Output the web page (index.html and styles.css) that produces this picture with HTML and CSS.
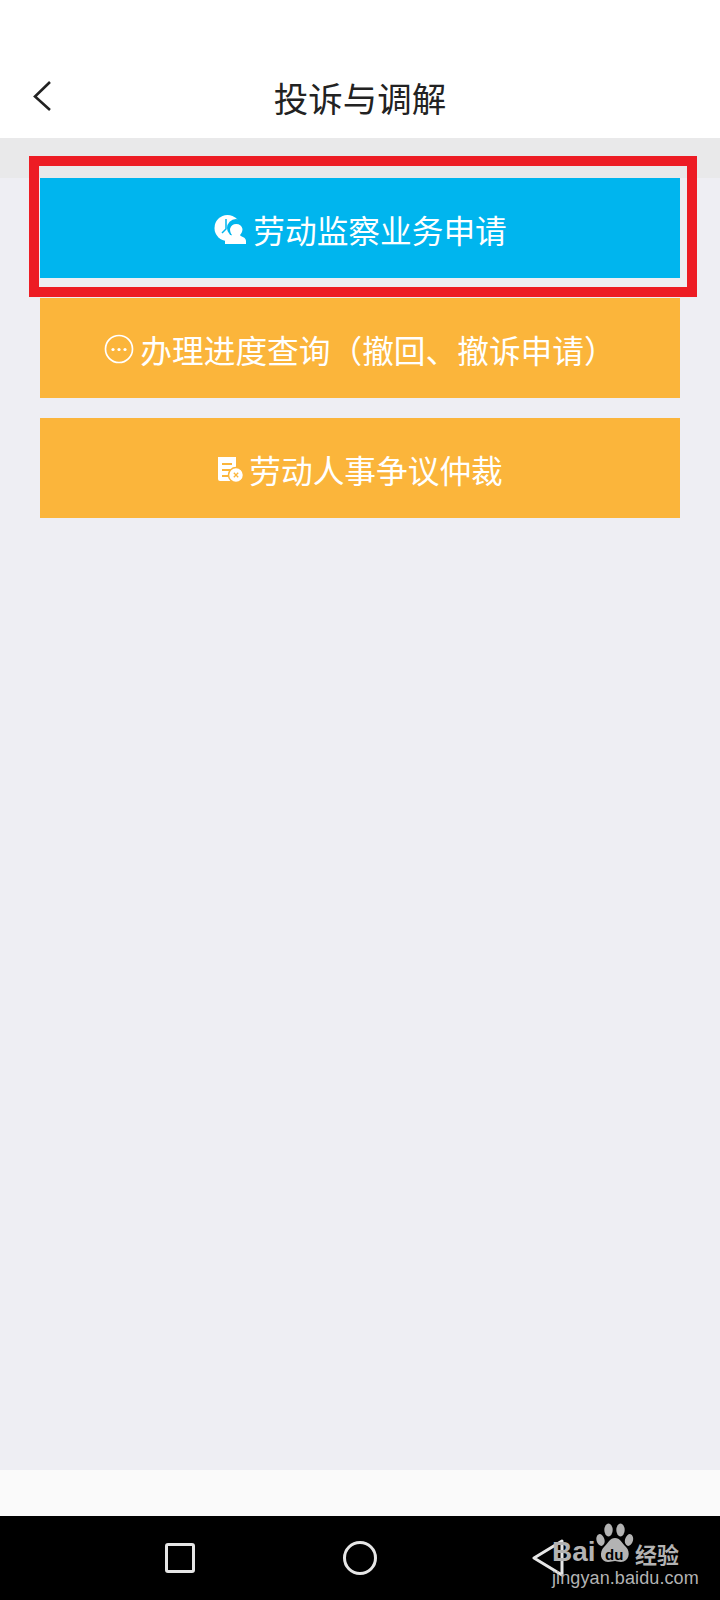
FILE: index.html
```html
<!DOCTYPE html>
<html lang="zh-CN">
<head>
<meta charset="utf-8">
<title>投诉与调解</title>
<link rel="stylesheet" href="styles.css">
</head>
<body>
<div class="screen">
  <header class="header">
    <svg class="back" width="24" height="34" viewBox="0 0 24 34"><path d="M20 3 5 17.500 20 31" fill="none" stroke="#222" stroke-width="2.600"/></svg>
    <h1 class="title">投诉与调解</h1>
  </header>
  <div class="band"></div>
  <main class="list">
    <a class="btn btn-blue">
      <svg class="icon" width="34" height="32" viewBox="0 0 34 32">
        <circle cx="14.500" cy="15" r="13" fill="#fff"/>
        <path d="M13 6v10l-4 4M17 12l-1 5" fill="none" stroke="#00b5ee" stroke-width="1.500"/>
        <circle cx="23" cy="15" r="9" fill="#00b5ee"/>
        <path d="M17 16a6.500 7 0 0 1 12.500 0c0 3-1.500 5-2.500 6 1 2 6 2 6 6v3H12v-3c0-4 5-4 7-6-1-1-2-3-2-6z" fill="#fff"/>
      </svg>
      <span>劳动监察业务申请</span>
    </a>
    <a class="btn btn-orange">
      <svg class="icon" width="30" height="30" viewBox="0 0 30 30">
        <circle cx="15" cy="15" r="13.500" fill="none" stroke="#fff" stroke-width="1.700"/>
        <circle cx="9" cy="15.500" r="1.600" fill="#fff"/>
        <circle cx="15" cy="15.500" r="1.600" fill="#fff"/>
        <circle cx="21" cy="15.500" r="1.600" fill="#fff"/>
      </svg>
      <span>办理进度查询（撤回、撤诉申请）</span>
    </a>
    <a class="btn btn-orange">
      <svg class="icon" width="26" height="26" viewBox="0 0 26 26">
        <path d="M1 1h18v24H3a2 2 0 0 1-2-2z" fill="#fff"/>
        <path d="M5 8h10M5 14h10M5 20h6" stroke="#fbb53b" stroke-width="2.200"/>
        <circle cx="19" cy="19" r="7.500" fill="#fff" stroke="#fbb53b" stroke-width="1.500"/>
        <path d="m16.800 16.800 4.400 4.400m0-4.400-4.400 4.400" stroke="#fbb53b" stroke-width="1.300"/>
      </svg>
      <span>劳动人事争议仲裁</span>
    </a>
  </main>
  <div class="footer"></div>
  <nav class="nav">
    <span class="nav-square"></span>
    <span class="nav-circle"></span>
    <svg class="nav-back" width="34" height="38" viewBox="0 0 34 38"><path d="M31 2 3 19l28 17z" fill="none" stroke="#e6e6e6" stroke-width="3" stroke-linejoin="round"/></svg>
  </nav>
  <div class="highlight"></div>
  <div class="mark">
    <div class="mark-top">
      <span class="mark-bai">Bai</span>
      <svg class="mark-paw" width="38" height="42" viewBox="0 0 38 42">
        <ellipse cx="12.500" cy="7" rx="4.200" ry="6.500"/>
        <ellipse cx="24.500" cy="7" rx="4.200" ry="6.500"/>
        <ellipse cx="4.500" cy="17" rx="4" ry="6" transform="rotate(-15 4.500 17)"/>
        <ellipse cx="33" cy="17" rx="4" ry="6" transform="rotate(15 33 17)"/>
        <path d="M19 15c5 0 7 5 11 9 5 5 3 15-5 15-3 0-4-1-6-1s-4 1-7 1c-8 0-9-10-4-15 4-4 6-9 11-9z"/>
      </svg>
      <span class="mark-du">du</span>
      <span class="mark-cn">经验</span>
    </div>
    <div class="mark-url">jingyan.baidu.com</div>
  </div>
</div>
</body>
</html>
```
FILE: styles.css
```css
* { box-sizing: border-box; margin: 0; padding: 0; }
html, body { width: 720px; height: 1600px; overflow: hidden; }
body { font-family: "Noto Sans CJK SC", "Noto Sans", sans-serif; background: #fff; }
.screen { position: relative; display: flex; flex-direction: column; width: 720px; height: 1600px; background: #eeeef3; }
.header { flex: 0 0 138px; display: flex; align-items: center; justify-content: center; padding-top: 56px; background: #fff; position: relative; }
.back { position: absolute; left: 30px; top: 79px; }
.title { font-size: 34.500px; font-weight: 400; line-height: 48px; color: #222; }
.band { flex: 0 0 40px; background: #e9e9ea; }
.list { flex: 1; display: flex; flex-direction: column; gap: 20px; padding: 0 40px; }
.btn { flex: 0 0 100px; display: flex; align-items: center; justify-content: center; gap: 6px; color: #fff; font-size: 31.700px; line-height: 44px; padding-top: 2px; }
.btn-blue { background: #00b5ee; }
.btn-orange { background: #fbb53b; }
.icon { flex: none; }
.footer { flex: 0 0 46px; background: #fafafa; }
.nav { flex: 0 0 84px; background: #000; position: relative; }
.nav-square { position: absolute; left: 165px; top: 27px; width: 30px; height: 30px; border: 3px solid #e6e6e6; border-radius: 3px; }
.nav-circle { position: absolute; left: 343px; top: 25px; width: 34px; height: 34px; border: 3px solid #e6e6e6; border-radius: 50%; }
.nav-back { position: absolute; left: 531px; top: 23px; }
.highlight { position: absolute; left: 29px; top: 156px; width: 668px; height: 141px; border: 10px solid #ed1c24; }
.mark { position: absolute; left: 552px; top: 1521px; width: 130px; color: #b3b3b3; font-family: "Liberation Sans", sans-serif; }
.mark-top { position: relative; height: 46px; }
.mark-bai { position: absolute; left: 0; top: 16px; font-size: 28px; line-height: 30px; font-weight: 700; }
.mark-paw { position: absolute; left: 44px; top: 2px; fill: #b3b3b3; }
.mark-du { position: absolute; left: 53px; top: 27px; font-size: 15px; line-height: 14px; font-weight: 700; color: #000; }
.mark-cn { position: absolute; left: 83px; top: 19px; font-family: "Noto Sans CJK SC", sans-serif; font-size: 22px; line-height: 26px; font-weight: 700; }
.mark-url { font-size: 18px; line-height: 22px; letter-spacing: 0.100px; white-space: nowrap; margin-top: 0; }
```
